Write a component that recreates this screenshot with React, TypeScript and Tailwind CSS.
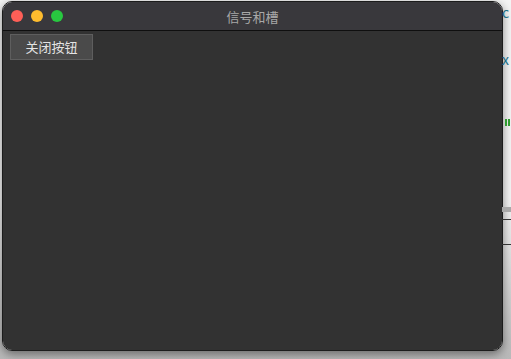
import React from "react";

const font = { fontFamily: '"Noto Sans CJK SC", "Liberation Sans", sans-serif' };

export default function App() {
  return (
    <div className="relative w-[511px] h-[359px] overflow-hidden bg-[linear-gradient(to_bottom,#f4f4f4_0%,#f4f4f4_55%,#b8b8b8_100%)]" style={font}>
      {/* desktop bits peeking out on the right */}
      <div className="absolute left-[502px] top-0 flex w-[9px] flex-col">
        <span className="mt-[5px] text-[14px] leading-none text-[#1d6f86]">c</span>
        <span className="mt-[33px] text-[14px] leading-none text-[#1d6f86]">x</span>
        <div className="mt-[53px] flex gap-[1px] pl-[3px]">
          <span className="h-[7px] w-[2px] bg-[#2f9a2f]" />
          <span className="h-[7px] w-[2px] bg-[#2f9a2f]" />
        </div>
        <div className="mt-[81px] h-[5px] bg-[#a8a8a8]" />
        <div className="mt-[7px] h-[1px] bg-[#333]" />
        <div className="mt-[24px] h-[1px] bg-[#333]" />
      </div>

      <div className="pl-[2px] pt-[1px]">
        <div className="flex h-[350px] w-[501px] flex-col overflow-hidden rounded-[10px] border border-[#1c1c1c] shadow-[0_3px_10px_rgba(0,0,0,0.45)]">
          <div className="grid h-[29px] shrink-0 grid-cols-[1fr_auto_1fr] items-center border-b border-[#0f0f0f] bg-[#39383c]">
            <div className="flex items-center gap-[8px] pl-[8px]">
              <span className="h-[12px] w-[12px] rounded-full bg-[#fe5f57]" />
              <span className="h-[12px] w-[12px] rounded-full bg-[#febc2e]" />
              <span className="h-[12px] w-[12px] rounded-full bg-[#28c840]" />
            </div>
            <div className="text-[13px] leading-[17px] text-[#a8a8a8]">信号和槽</div>
            <div />
          </div>
          <div className="flex-1 bg-[#323232] pl-[7px] pt-[3px]">
            <button className="flex h-[26px] w-[83px] items-center justify-center border border-[#5e5e5e] bg-[#4a4a4a] text-[13px] text-[#e4e4e4]">
              关闭按钮
            </button>
          </div>
        </div>
      </div>
    </div>
  );
}
